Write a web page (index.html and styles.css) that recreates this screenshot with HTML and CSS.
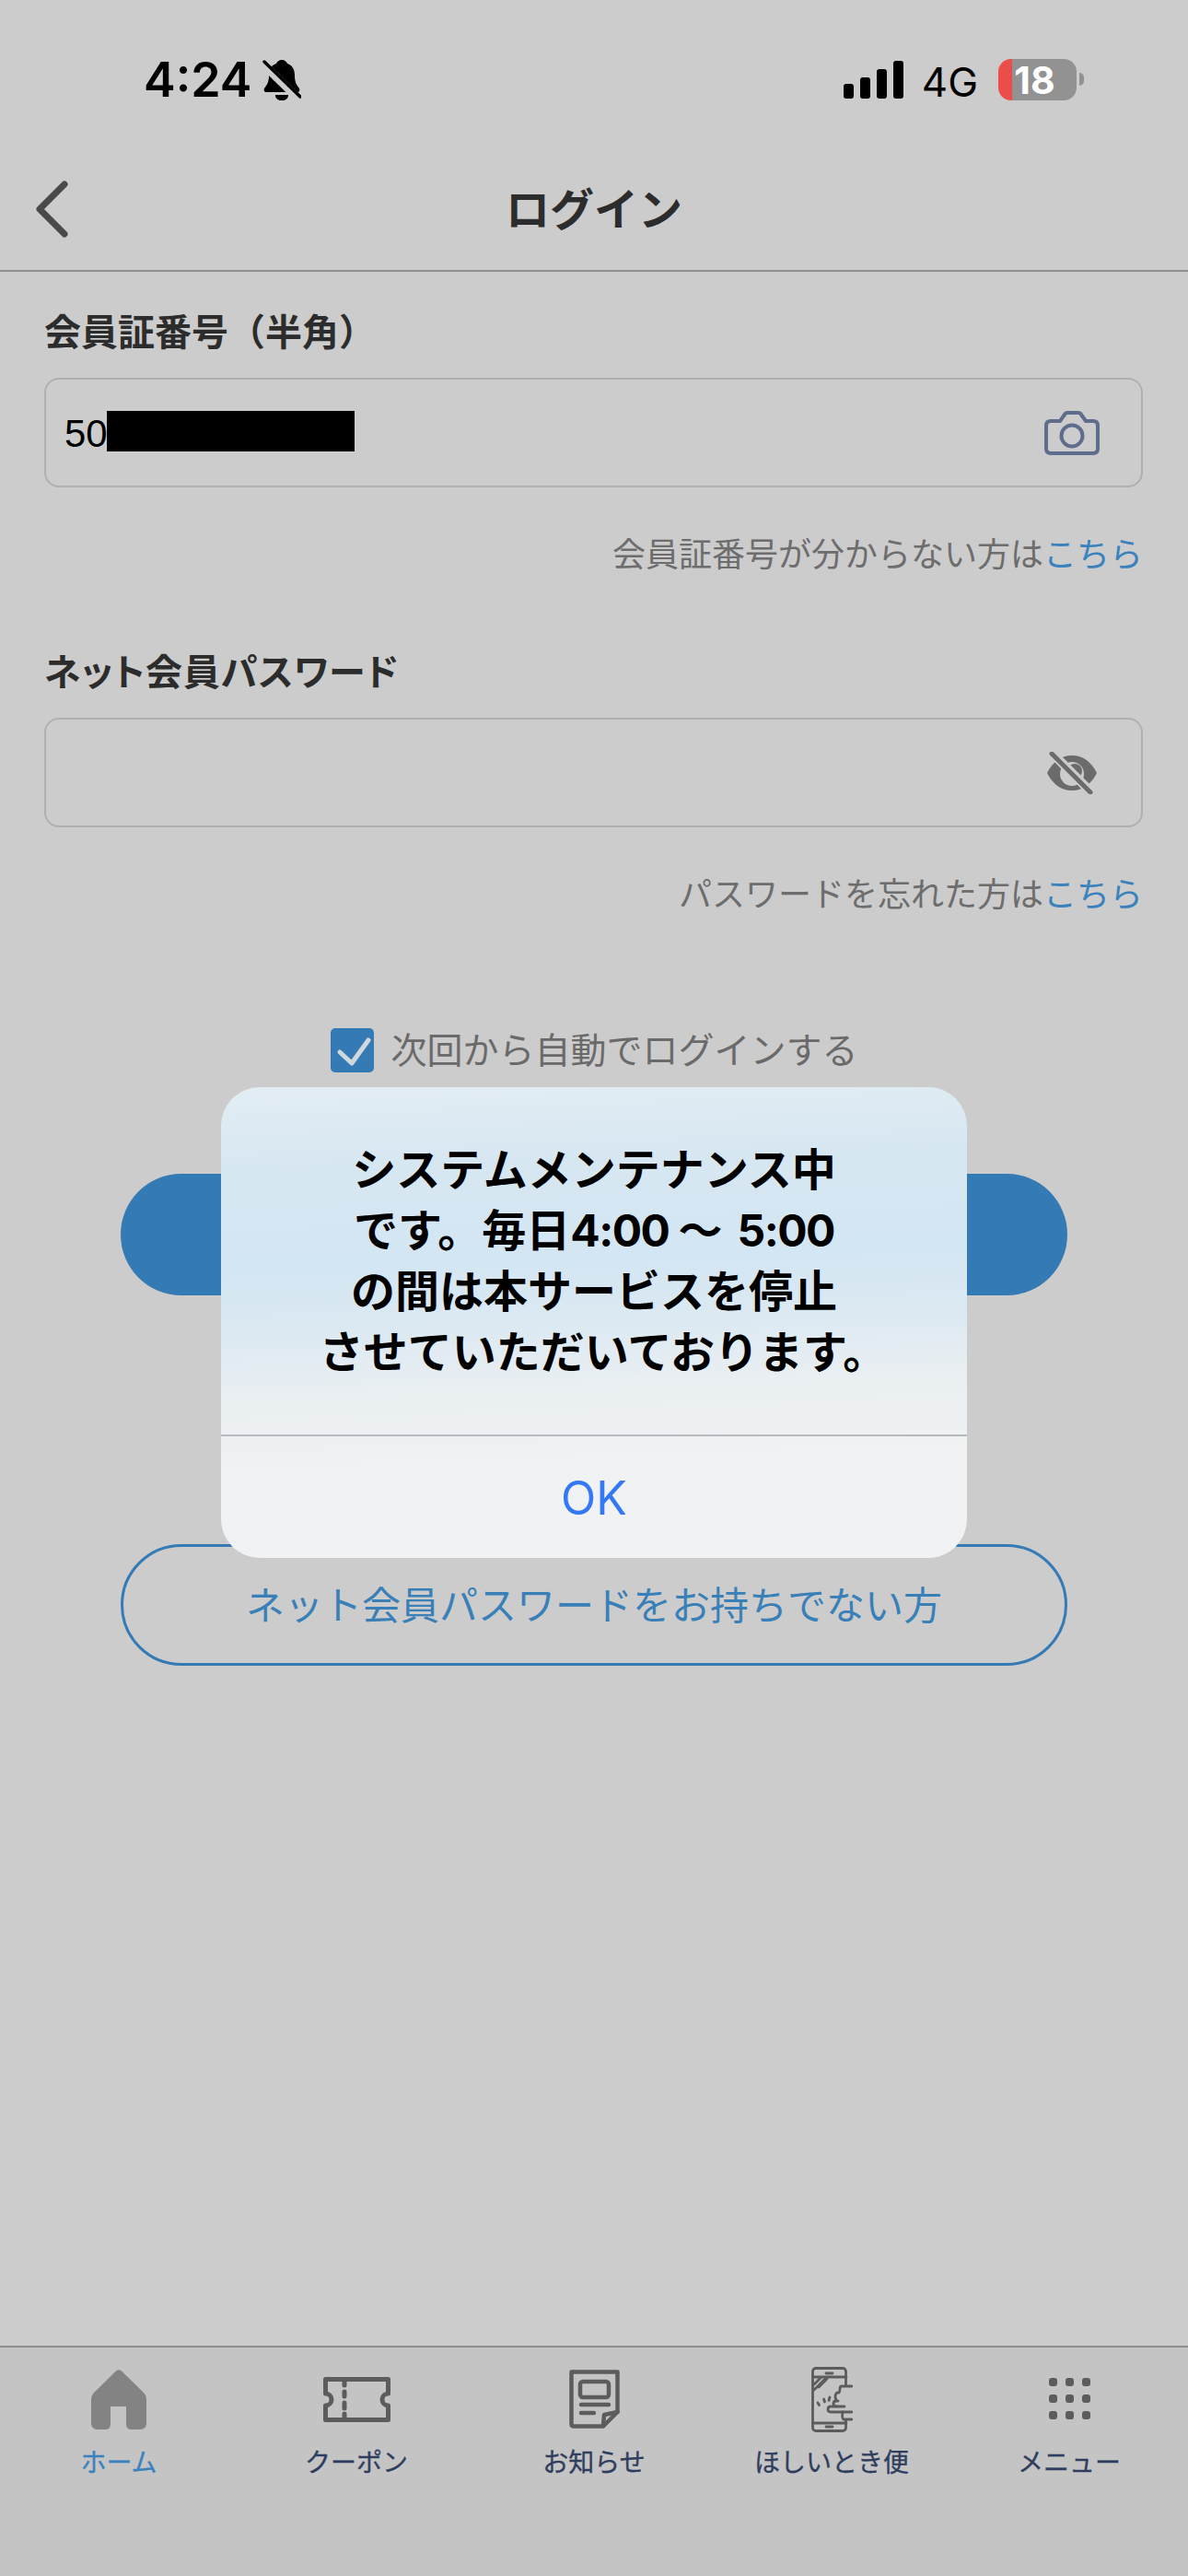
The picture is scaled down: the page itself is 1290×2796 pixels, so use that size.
FILE: index.html
```html
<!DOCTYPE html>
<html lang="ja">
<head>
    <meta charset="UTF-8">
    <meta name="viewport" content="width=device-width, initial-scale=1.0">
    <title>ログイン</title>
    <link rel="stylesheet" href="styles.css">
</head>
<body>
    <div class="status-bar">
        <div class="status-left">
            <span class="time">4:24</span>
            <svg class="bell" viewBox="0 0 42 46">
                <path d="M21 1c3 0 5 2 6 4 6 2 8 7 8 13 0 7 2 10 5 14 1 2 0 4-2 4H4c-2 0-3-2-2-4 3-4 5-7 5-14 0-6 2-11 8-13 1-2 3-4 6-4z" fill="#000"/>
                <path d="M14 39h14c0 4-3 6-7 6s-7-2-7-6z" fill="#000"/>
                <path d="M1 6l40 39" stroke="#ccc" stroke-width="9"/>
                <path d="M2 3l39 38" stroke="#000" stroke-width="3.5" stroke-linecap="round"/>
            </svg>
        </div>
        <div class="status-right">
            <div class="signal">
                <i class="bar bar1"></i><i class="bar bar2"></i><i class="bar bar3"></i><i class="bar bar4"></i>
            </div>
            <span class="network">4G</span>
            <div class="battery"><span>18</span></div>
            <i class="battery-nub"></i>
        </div>
    </div>

    <header class="nav">
        <svg class="back" viewBox="0 0 36 62">
            <path d="M32 4L5 31l27 27" fill="none" stroke="#4a4a4a" stroke-width="7" stroke-linecap="round" stroke-linejoin="round"/>
        </svg>
        <h1>ログイン</h1>
    </header>

    <main class="form">
        <label class="field-label">会員証番号（半角）</label>
        <div class="input-box">
            <span class="input-value">50</span>
            <span class="redacted"></span>
            <svg class="input-icon camera" viewBox="0 0 60 48">
                <path d="M7 11h10l5-7q1-2 3-2h12q2 0 3 2l5 7h8q5 0 5 5v25q0 5-5 5H7q-5 0-5-5V16q0-5 5-5z" fill="none" stroke="#5f6d8c" stroke-width="4" stroke-linejoin="round"/>
                <circle cx="30" cy="27" r="11.5" fill="none" stroke="#5f6d8c" stroke-width="4"/>
            </svg>
        </div>
        <p class="hint">会員証番号が分からない方は<a class="link">こちら</a></p>

        <label class="field-label second">ネット会員パスワード</label>
        <div class="input-box">
            <svg class="input-icon eye" viewBox="0 0 54 46">
                <path d="M0 23C6 11 15 4 27 4s21 7 27 19c-6 12-15 19-27 19S6 35 0 23z" fill="#6b6b6b"/>
                <circle cx="27" cy="24" r="13" fill="#ccc"/>
                <circle cx="30" cy="21" r="8" fill="#6b6b6b"/>
                <path d="M4 0l46 46" stroke="#ccc" stroke-width="10"/>
                <path d="M5 2l42 42" stroke="#6b6b6b" stroke-width="5" stroke-linecap="round"/>
            </svg>
        </div>
        <p class="hint">パスワードを忘れた方は<a class="link">こちら</a></p>

        <div class="remember">
            <span class="checkbox">
                <svg viewBox="0 0 47 48"><path d="M10 26l13 12L41 13" fill="none" stroke="#cfd8dd" stroke-width="5" stroke-linecap="round" stroke-linejoin="round"/></svg>
            </span>
            <span>次回から自動でログインする</span>
        </div>

        <button class="btn btn-primary"></button>
        <button class="btn btn-outline">ネット会員パスワードをお持ちでない方</button>
    </main>

    <nav class="tab-bar">
        <div class="tab active">
            <div class="tab-icon">
                <svg width="60" height="65" viewBox="0 0 60 65">
                    <path d="M27 1.500q3-2.500 6 0L57 25q3 3 3 8v25q0 7-7 7H44q-6 0-6-6V40H21v19q0 6-6 6H7q-7 0-7-7V33q0-5 3-8z" fill="#838383"/>
                </svg>
            </div>
            <span>ホーム</span>
        </div>
        <div class="tab">
            <div class="tab-icon">
                <svg width="73" height="49" viewBox="0 0 73 49" fill="none" stroke="#5c5c5c" stroke-width="5" stroke-linejoin="round">
                    <path d="M2.500 2.500h68V18a6.500 6.500 0 0 0 0 13v15.500h-68V31a6.500 6.500 0 0 0 0-13z"/>
                    <path d="M23 4v5M23 16v5M23 28v6M23 40v5" stroke-linecap="round"/>
                </svg>
            </div>
            <span>クーポン</span>
        </div>
        <div class="tab">
            <div class="tab-icon">
                <svg width="55" height="64" viewBox="0 0 55 64" fill="none" stroke="#5c5c5c" stroke-width="4.500" stroke-linejoin="round" stroke-linecap="round">
                    <path d="M2.500 2.500h50V46L37 61.500H5q-2.500 0-2.500-2.500z"/>
                    <path d="M52.500 46L38 49l-1 12"/>
                    <rect x="12" y="13" width="31" height="17" rx="3"/>
                    <path d="M13 38h30M13 47h14"/>
                </svg>
            </div>
            <span>お知らせ</span>
        </div>
        <div class="tab">
            <div class="tab-icon">
                <svg width="45" height="71" viewBox="0 0 45 71" fill="none" stroke="#5c5c5c" stroke-width="2.800" stroke-linejoin="round" stroke-linecap="round">
                    <path d="M37.500 20V5a3.500 3.500 0 0 0-3.500-3.500H5A3.500 3.500 0 0 0 1.500 5v61A3.500 3.500 0 0 0 5 69.500h29a3.500 3.500 0 0 0 3.500-3.500v-8"/>
                    <path d="M2 11h36M2 61h36M16 7h7M16 65h7"/>
                    <path d="M3 25l13-13M3 19l7-7M8 22l9-9"/>
                    <path d="M44 21H33q-2 0-2 3t-1 4h-2q-2 1-2 4.500t3 4.500h-2q-3 0-3 3t3 3"/>
                    <path d="M44 49H21q-3 0-3-3t3-3h15"/>
                    <path d="M44 57H35q-2-1-1-8"/>
                    <path d="M7 39l1.500 2.500M13.500 35l1 3M20 33l-1 3.500"/>
                </svg>
            </div>
            <span>ほしいとき便</span>
        </div>
        <div class="tab">
            <div class="tab-icon">
                <div class="dots">
                    <i></i><i></i><i></i><i></i><i></i><i></i><i></i><i></i><i></i>
                </div>
            </div>
            <span>メニュー</span>
        </div>
    </nav>

    <!-- maintenance alert sits over the form -->
    <div class="alert">
        <p class="alert-message">システムメンテナンス中<br>です。毎日<span class="num">4:00</span><span class="wave">～</span><span class="num">5:00</span><br>の間は本サービスを停止<br><span class="last-line">させていただいております。</span></p>
        <div class="alert-action">OK</div>
    </div>
</body>
</html>
```

FILE: styles.css
```css
* {
    box-sizing: border-box;
}

html, body {
    margin: 0;
    padding: 0;
}

body {
    position: relative;
    display: flex;
    flex-direction: column;
    width: 1290px;
    height: 2796px;
    overflow: hidden;
    background-color: #cccccc;
    font-family: Inter, "Noto Sans CJK JP", sans-serif;
    color: #2c2c2c;
}

/* status bar */
.status-bar {
    display: flex;
    justify-content: space-between;
    height: 170px;
    padding: 64px 113px 0 156px;
}

.status-left {
    display: flex;
    align-items: flex-start;
    gap: 12px;
}

.time {
    font-size: 52px;
    font-weight: 600;
    line-height: 46px;
    color: #000;
}

.bell {
    width: 42px;
    height: 46px;
}

.status-right {
    display: flex;
    align-items: flex-start;
}

.signal {
    display: flex;
    align-items: flex-end;
    gap: 7px;
    height: 41px;
    margin-top: 2px;
}

.bar {
    width: 11px;
    background-color: #000;
    border-radius: 3px;
}

.bar1 { height: 16px; }
.bar2 { height: 23px; }
.bar3 { height: 32px; }
.bar4 { height: 41px; }

.network {
    margin-left: 20px;
    font-size: 44px;
    line-height: 46px;
    color: #000;
    margin-top: 2px;
}

.battery {
    display: flex;
    justify-content: center;
    align-items: center;
    width: 85px;
    height: 45px;
    margin-left: 22px;
    padding-right: 6px;
    border-radius: 14px;
    background: linear-gradient(90deg, #ec4c4a 15px, #929292 15px);
    font-size: 41px;
    font-weight: 700;
    color: #fff;
}

.battery-nub {
    width: 5px;
    height: 14px;
    margin: 15px 0 0 3px;
    background-color: #929292;
    border-radius: 0 7px 7px 0;
}

/* title row */
.nav {
    position: relative;
    display: flex;
    justify-content: center;
    align-items: center;
    height: 125px;
    border-bottom: 2px solid #8f8f8f;
}

.nav h1 {
    margin: 0 0 8px;
    font-size: 48px;
    font-weight: 700;
    line-height: 60px;
}

.back {
    position: absolute;
    left: 38px;
    top: 26px;
    width: 36px;
    height: 62px;
}

/* form */
.form {
    display: flex;
    flex-direction: column;
    flex: 1;
    padding: 41px 49px 0 48px;
}

.field-label {
    font-size: 40px;
    font-weight: 700;
    line-height: 50px;
}

.field-label.second {
    margin-top: 78px;
    font-feature-settings: "palt";
    letter-spacing: 1px;
}

.input-box {
    position: relative;
    display: flex;
    align-items: center;
    height: 119px;
    margin-top: 24px;
    padding-left: 20px;
    border: 2px solid #b0b0b0;
    border-radius: 16px;
}

.input-value {
    width: 46px;
    padding-top: 3px;
    font-family: "Liberation Sans", sans-serif;
    font-size: 42px;
    color: #000;
}

.redacted {
    width: 269px;
    height: 44px;
    margin-bottom: 4px;
    background-color: #000;
}

.input-icon {
    position: absolute;
    top: 50%;
    transform: translateY(-50%);
}

.camera {
    right: 45px;
    width: 60px;
    height: 48px;
}

.eye {
    right: 48px;
    width: 54px;
    height: 46px;
}

.hint {
    margin: 48px 0 0;
    font-size: 36px;
    line-height: 50px;
    text-align: right;
    color: #6d6d6d;
}

.link {
    color: #3a82bd;
}

.remember {
    display: flex;
    justify-content: center;
    align-items: center;
    gap: 18px;
    margin-top: 120px;
    padding-left: 2px;
    font-size: 39px;
    line-height: 48px;
    color: #6a6a6a;
}

.checkbox {
    display: block;
    width: 47px;
    height: 48px;
    background-color: #347ab5;
    border-radius: 5px;
}

.checkbox svg {
    display: block;
}

.btn {
    display: block;
    width: 1028px;
    margin-left: 83px;
    border-radius: 66px;
    font-family: inherit;
    font-size: 42px;
}

.btn-primary {
    height: 132px;
    margin-top: 110px;
    border: none;
    background-color: #347ab5;
}

.btn-outline {
    height: 132px;
    margin-top: 270px;
    padding-bottom: 7px;
    border: 3px solid #347ab5;
    background: transparent;
    color: #3a80b8;
}

/* bottom tabs */
.tab-bar {
    display: grid;
    grid-template-columns: repeat(5, 258px);
    height: 250px;
    border-top: 2px solid #8f8f8f;
    background-color: #c4c4c4;
}

.tab {
    display: flex;
    flex-direction: column;
    align-items: center;
    font-size: 28px;
    font-weight: 400;
    line-height: 36px;
    color: #2f3e5e;
    -webkit-text-stroke: 0.3px currentColor;
}

.tab.active {
    color: #3a82bd;
}

.tab-icon {
    display: flex;
    justify-content: center;
    align-items: center;
    height: 72px;
    margin: 20px 0 15px;
}

.tab-icon svg {
    display: block;
}

.dots {
    display: grid;
    grid-template-columns: repeat(3, 9px);
    grid-template-rows: repeat(3, 9px);
    gap: 9px;
    margin-top: -2px;
}

.dots i {
    background-color: #5c5c5c;
    border-radius: 3px;
}

/* alert */
.alert {
    position: absolute;
    left: 240px;
    top: 1180px;
    display: flex;
    flex-direction: column;
    width: 810px;
    height: 511px;
    border-radius: 42px;
    overflow: hidden;
    background: linear-gradient(178deg, #e3edf3 0, #d7e7f2 90px, #d3e6f3 200px, #dce9f2 270px, #eaeff2 340px, #f0f2f3 420px, #f1f2f4 100%);
}

.alert-message {
    flex: 1;
    margin: 0;
    padding-top: 57px;
    font-size: 48px;
    font-weight: 700;
    line-height: 66px;
    text-align: center;
    color: #000;
    border-bottom: 2px solid #b6babe;
}

.num {
    letter-spacing: -1.500px;
}

.wave {
    margin: 0 16px 0 10px;
}

.last-line {
    padding-left: 20px;
}

.alert-action {
    display: flex;
    justify-content: center;
    align-items: center;
    height: 132px;
    padding-top: 2px;
    font-size: 50px;
    color: #3478f6;
}
```
